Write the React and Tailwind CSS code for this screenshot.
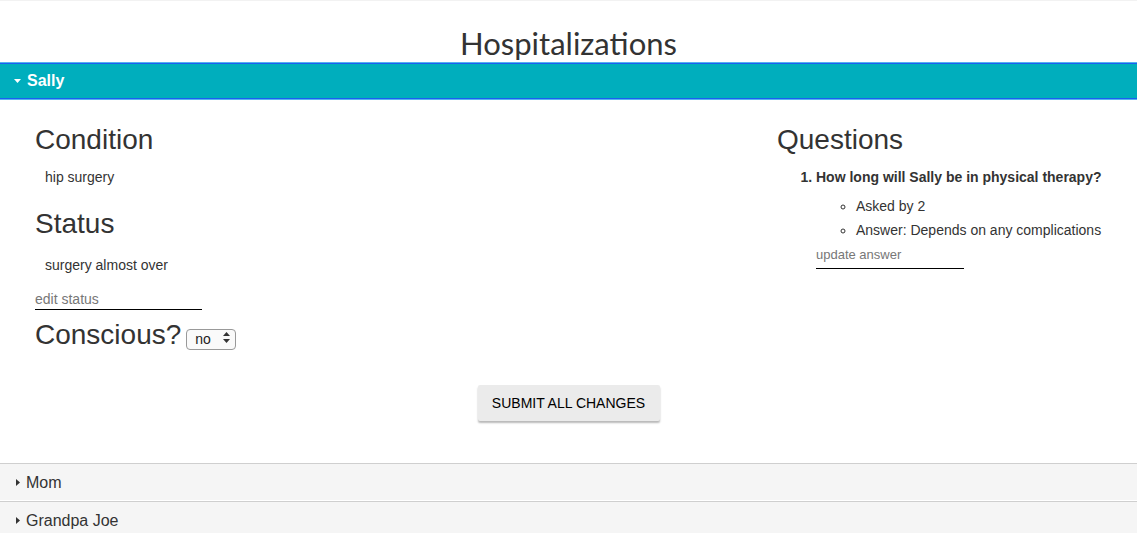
import { useState } from "react";

const people = ["Mom", "Grandpa Joe"];

function Caret({ open }) {
  // small filled triangle, down when open, right when closed
  return open ? (
    <svg width="7" height="4" viewBox="0 0 7 4" className="mr-[6px]">
      <path d="M0 0 L7 0 L3.5 4 Z" fill="#ffffff" />
    </svg>
  ) : (
    <svg width="4" height="7" viewBox="0 0 4 7" className="mr-[6px]">
      <path d="M0 0 L4 3.5 L0 7 Z" fill="#333333" />
    </svg>
  );
}

export default function App() {
  const [status, setStatus] = useState("");
  const [answer, setAnswer] = useState("");
  const [conscious, setConscious] = useState("no");

  return (
    <div className="min-h-screen bg-white text-[#333] font-['Liberation_Sans',Arial,sans-serif] overflow-hidden">
      {/* TITLE */}
      <div className="h-[62px] border-t border-[#f2f2f2] pt-[27px] text-center">
        <h1 className="text-[31px] leading-[31px] font-normal font-['Lato','Open_Sans',sans-serif] text-[#333]">
          Hospitalizations
        </h1>
      </div>

      {/* OPEN PANEL */}
      <div className="h-px bg-[#55b2ee]" />
      <div className="h-px bg-[#1b5ff1]" />
      <div className="h-[34px] bg-[#00aebd] flex items-center pl-[14px]">
        <Caret open />
        <span className="text-white text-[16px] font-bold">Sally</span>
      </div>
      <div className="h-px bg-[#1b5ff1]" />
      <div className="h-px bg-[#55b2ee]" />

      <div className="flex pl-[35px] pt-[24px]">
        {/* LEFT */}
        <div className="flex-1">
          <h3 className="text-[28px] leading-[31px]">Condition</h3>
          <p className="mt-[12px] pl-[10px] text-[14px] leading-[20px]">hip surgery</p>

          <h3 className="mt-[21px] text-[28px] leading-[31px]">Status</h3>
          <p className="mt-[16px] pl-[10px] text-[14px] leading-[20px]">surgery almost over</p>

          <input
            value={status}
            onChange={(e) => setStatus(e.target.value)}
            placeholder="edit status"
            className="mt-[14px] block w-[167px] h-[21px] border-b border-black text-[14px] outline-none placeholder:text-[#777]"
          />

          <div className="mt-[9px] flex items-baseline">
            <h3 className="text-[28px] leading-[31px]">Conscious?</h3>
            <div className="relative ml-[5px] w-[50px] h-[21px]">
              <select
                value={conscious}
                onChange={(e) => setConscious(e.target.value)}
                className="appearance-none w-full h-full rounded-[4px] border border-[#999] bg-[#fafafa] pl-[8px] text-[14px] leading-[19px] text-[#222] outline-none"
              >
                <option value="no">no</option>
                <option value="yes">yes</option>
              </select>
              <svg width="7" height="11" viewBox="0 0 7 11" className="absolute right-[6px] top-[5px] pointer-events-none">
                <path d="M3.5 0 L7 4 L0 4 Z" fill="#333" />
                <path d="M0 7 L7 7 L3.5 11 Z" fill="#333" />
              </svg>
            </div>
          </div>
        </div>

        {/* RIGHT */}
        <div className="w-[360px]">
          <h3 className="text-[28px] leading-[31px]">Questions</h3>
          <ol className="mt-[12px] list-decimal pl-[39px] text-[14px] leading-[20px] marker:font-bold">
            <li>
              <span className="font-bold">How long will Sally be in physical therapy?</span>
              <ul className="mt-[9px] list-[circle] pl-[40px] marker:font-normal">
                <li>Asked by 2</li>
                <li className="mt-[4px]">Answer: Depends on any complications</li>
              </ul>
              <input
                value={answer}
                onChange={(e) => setAnswer(e.target.value)}
                placeholder="update answer"
                className="mt-[6px] block w-[148px] h-[23px] pb-[6px] border-b border-black text-[13px] outline-none placeholder:text-[#777]"
              />
            </li>
          </ol>
        </div>
      </div>

      {/* SUBMIT */}
      <div className="mt-[35px] flex justify-center">
        <button className="w-[182px] h-[36px] rounded-[2px] bg-[#ebebeb] text-[14px] text-black uppercase shadow-[0_2px_2px_rgba(0,0,0,0.28)]">
          Submit all changes
        </button>
      </div>

      {/* CLOSED PANELS */}
      <div className="mt-[42px]">
        {people.map((name) => (
          <div
            key={name}
            className="h-[38px] border-t border-[#cfcfcf] border-b border-b-white bg-[#f5f5f5] flex items-center pl-[16px]"
          >
            <Caret />
            <span className="text-[16px] text-[#333] pt-[2px]">{name}</span>
          </div>
        ))}
      </div>
    </div>
  );
}
